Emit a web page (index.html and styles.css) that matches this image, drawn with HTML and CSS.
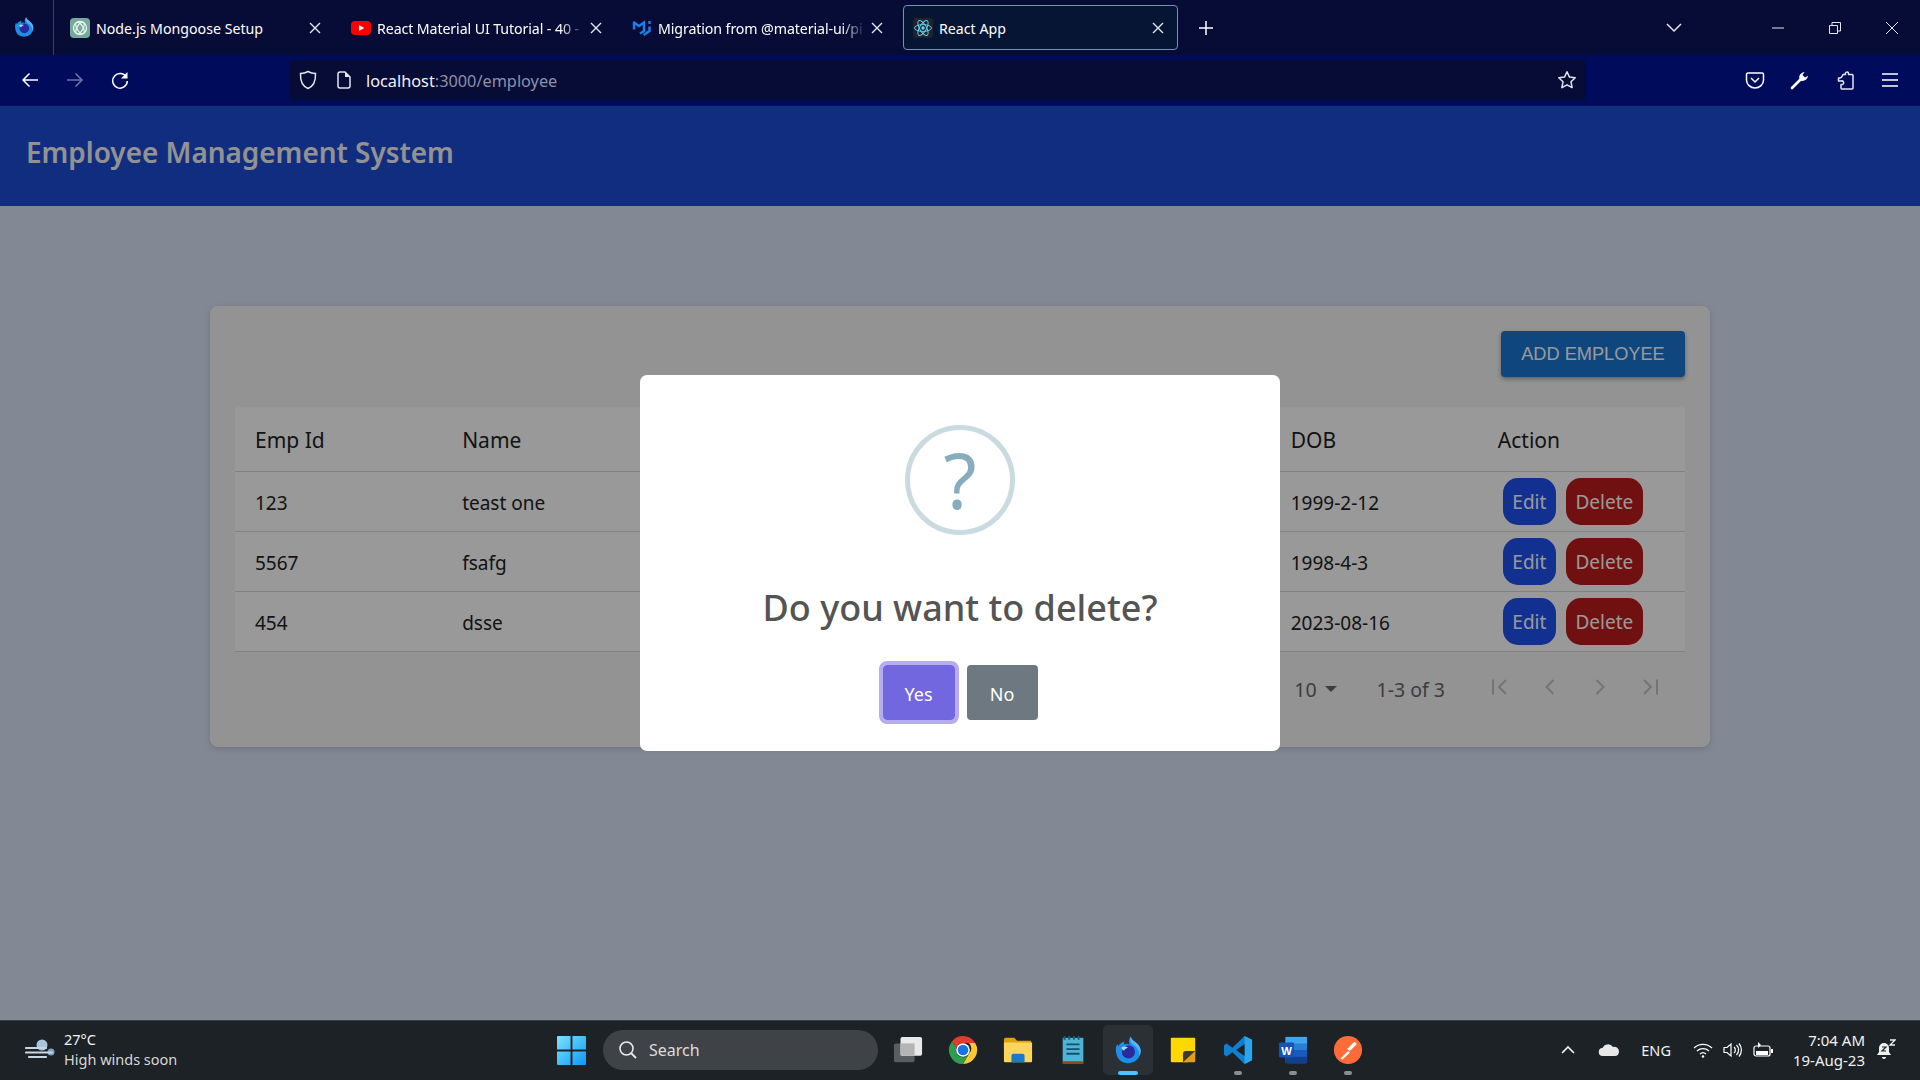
FILE: index.html
```html
<!DOCTYPE html>
<html lang="en">
<head>
  <meta charset="UTF-8">
  <title>React App</title>
  <link rel="stylesheet" href="styles.css">
</head>
<body>
  <svg class="sprites" width="0" height="0">
    <symbol id="firefox" viewBox="0 0 32 32">
      <path d="M3 15c0-2 .6-4 1.600-5.500 .2 1 .6 1.700 1.200 2.200C7.500 8.500 10 7 12.500 6.800 11.800 8 11.700 9 12 10c2-1 4.500-.8 6 .5-1.500-2.500-1.500-5.500 1-9 .5 3 3 4.500 5.500 6.500 3.500 2.800 5 6 5 9 0 7.500-6 13-14 13S3 24 3 15z" fill="#1d8fe8"/>
      <path d="M19 1.500c.5 3 3 4.500 5.500 6.500 3.500 2.800 5 6 5 9 0 2-.5 3.800-1.300 5.300C28.500 15 24 11.500 21 10c-2-1.800-3.500-4.500-2-8.500z" fill="#54b4f5"/>
      <circle cx="16.500" cy="18" r="7" fill="#2b2a9c"/>
      <path d="M9 13.500c2-1.500 5-1.500 7 0-2 .5-3.500 1.500-4 3-1.500-.3-2.500-1.500-3-3z" fill="#a8ddfb"/>
    </symbol>
    <symbol id="x" viewBox="0 0 14 14">
      <path d="M2 2l10 10M12 2L2 12" stroke="currentColor" stroke-width="1.400" fill="none"/>
    </symbol>
  </svg>

  <div class="tabbar">
    <div class="ff-button"><svg width="22" height="24"><use href="#firefox"/></svg></div>
    <div class="tab">
      <svg class="favicon" viewBox="0 0 20 20">
        <rect width="20" height="20" rx="4" fill="#74aa9c"/>
        <g fill="none" stroke="#e8f3f0" stroke-width="1.300">
          <circle cx="10" cy="10" r="6.500"/>
          <ellipse cx="10" cy="10" rx="6.500" ry="3" transform="rotate(60 10 10)"/>
          <ellipse cx="10" cy="10" rx="6.500" ry="3" transform="rotate(-60 10 10)"/>
        </g>
      </svg>
      <span class="tab-title">Node.js Mongoose Setup</span>
      <svg class="tab-close"><use href="#x"/></svg>
    </div>
    <div class="tab">
      <svg class="favicon" viewBox="0 0 20 20">
        <rect y="3" width="20" height="14" rx="4" fill="#f00"/>
        <path d="M8 7l5.200 3L8 13z" fill="#fff"/>
      </svg>
      <span class="tab-title tab-title-long">React Material UI Tutorial - 40 -</span>
      <svg class="tab-close"><use href="#x"/></svg>
    </div>
    <div class="tab">
      <svg class="favicon" viewBox="0 0 20 20">
        <path d="M2 3.500v8M2 4.500l5 3.500 5-3.500v8.500l-4 2.500" stroke="#1a7fe8" stroke-width="2.400" fill="none"/>
        <path d="M17.500 3v3M17.500 8.500V13l-6 4" stroke="#1a7fe8" stroke-width="2.400" fill="none"/>
      </svg>
      <span class="tab-title tab-title-long">Migration from @material-ui/pi</span>
      <svg class="tab-close"><use href="#x"/></svg>
    </div>
    <div class="tab tab-active">
      <svg class="favicon" viewBox="0 0 20 20">
        <rect width="20" height="20" rx="3" fill="#20232a"/>
        <g fill="none" stroke="#61dafb" stroke-width=".9">
          <ellipse cx="10" cy="10" rx="8.500" ry="3.400"/>
          <ellipse cx="10" cy="10" rx="8.500" ry="3.400" transform="rotate(60 10 10)"/>
          <ellipse cx="10" cy="10" rx="8.500" ry="3.400" transform="rotate(120 10 10)"/>
        </g>
        <circle cx="10" cy="10" r="1.700" fill="#61dafb"/>
      </svg>
      <span class="tab-title">React App</span>
      <svg class="tab-close"><use href="#x"/></svg>
    </div>
    <svg class="new-tab" viewBox="0 0 16 16"><path d="M8 1v14M1 8h14" stroke="#fff" stroke-width="1.500"/></svg>
    <div class="window-controls">
      <svg class="tabs-list" viewBox="0 0 16 10"><path d="M1 1l7 7 7-7" stroke="#e4e6ee" stroke-width="1.500" fill="none"/></svg>
      <svg class="win-btn" viewBox="0 0 12 12"><path d="M0 6h12" stroke="#e4e6ee"/></svg>
      <svg class="win-btn" viewBox="0 0 12 12"><path d="M.5 3.500h8v8h-8zM3 3.500V.500h8.500V9H8.500" stroke="#e4e6ee" fill="none"/></svg>
      <svg class="win-btn win-close" viewBox="0 0 14 14"><path d="M1 1l12 12M13 1L1 13" stroke="#e4e6ee" fill="none"/></svg>
    </div>
  </div>

  <div class="toolbar">
    <svg class="nav-icon" viewBox="0 0 18 18"><path d="M17 9H2M8.500 2.500L2 9l6.500 6.500" stroke="#fff" stroke-width="1.500" fill="none"/></svg>
    <svg class="nav-icon dim" viewBox="0 0 18 18"><path d="M1 9h15M9.500 2.500L16 9l-6.500 6.500" stroke="#6f74a8" stroke-width="1.500" fill="none"/></svg>
    <svg class="nav-icon" viewBox="0 0 18 18"><path d="M15.500 6.500A7.300 7.300 0 1 0 16.300 10" stroke="#fff" stroke-width="1.500" fill="none"/><path d="M16.500 1v6.500H10z" fill="#fff"/></svg>
    <div class="urlbar">
      <svg class="url-icon" viewBox="0 0 18 20"><path d="M9 1.500c2.500 1.500 5 2 7.500 2 .3 7-1.500 12.500-7.500 15-6-2.500-7.800-8-7.500-15 2.500 0 5-.5 7.500-2z" stroke="#e4e6ee" stroke-width="1.500" fill="none"/></svg>
      <svg class="url-icon page-icon" viewBox="0 0 14 18"><path d="M3 1h5l5 5v9a2 2 0 0 1-2 2H3a2 2 0 0 1-2-2V3a2 2 0 0 1 2-2z" stroke="#e4e6ee" stroke-width="1.500" fill="none"/><path d="M8 1v5h5z" fill="#e4e6ee"/></svg>
      <span class="url-text">localhost<span class="url-dim">:3000/employee</span></span>
      <svg class="star" viewBox="0 0 20 20"><path d="M10 1.800l2.500 5.300 5.700.7-4.200 4 1.100 5.800-5.100-2.800-5.100 2.800 1.100-5.800-4.200-4 5.700-.7z" stroke="#e4e6ee" stroke-width="1.500" stroke-linejoin="round" fill="none"/></svg>
    </div>
    <div class="toolbar-right">
      <svg class="tool-icon" viewBox="0 0 20 20"><path d="M3 3h14a1.500 1.500 0 0 1 1.500 1.500V10a8.500 8 0 0 1-17 0V4.500A1.500 1.500 0 0 1 3 3z" stroke="#fff" stroke-width="1.500" fill="none"/><path d="M6 8l4 4 4-4" stroke="#fff" stroke-width="1.500" fill="none"/></svg>
      <svg class="tool-icon" viewBox="0 0 20 20"><path d="M2 18l8-8" stroke="#fff" stroke-width="2.600" stroke-linecap="round"/><path d="M9.500 9c-1-3 1-6.500 5-7l-2 3 2.500 2.500 3-1.800c-.3 3.500-4 6-7 5z" fill="#fff"/></svg>
      <svg class="tool-icon" viewBox="0 0 20 20"><path d="M8 4.500h2.500c-1.200-2.500 3-3.500 3-1v1H17a1 1 0 0 1 1 1V18a1 1 0 0 1-1 1H7a1 1 0 0 1-1-1v-3.500c2 .5 3-1 2.700-2-.3-1.200-1.500-1.800-2.700-1.500H3.500V8H5c2 0 2-1.500 3-3.500z" stroke="#e4e6ee" stroke-width="1.500" fill="none" stroke-linejoin="round"/></svg>
      <svg class="tool-icon" viewBox="0 0 20 20"><path d="M2 4h16M2 10h16M2 16h16" stroke="#fff" stroke-width="1.500"/></svg>
    </div>
  </div>

  <div class="page">
    <header class="appbar">Employee Management System</header>
    <main class="content">
      <section class="card">
        <div class="card-actions">
          <button class="add-btn">ADD EMPLOYEE</button>
        </div>
        <table class="emp-table">
          <thead>
            <tr><th>Emp Id</th><th>Name</th><th></th><th></th><th></th><th>DOB</th><th>Action</th></tr>
          </thead>
          <tbody>
            <tr>
              <td>123</td><td>teast one</td><td></td><td></td><td></td><td>1999-2-12</td>
              <td class="actions"><button class="btn-edit">Edit</button><button class="btn-delete">Delete</button></td>
            </tr>
            <tr>
              <td>5567</td><td>fsafg</td><td></td><td></td><td></td><td>1998-4-3</td>
              <td class="actions"><button class="btn-edit">Edit</button><button class="btn-delete">Delete</button></td>
            </tr>
            <tr>
              <td>454</td><td>dsse</td><td></td><td></td><td></td><td>2023-08-16</td>
              <td class="actions"><button class="btn-edit">Edit</button><button class="btn-delete">Delete</button></td>
            </tr>
          </tbody>
        </table>
        <div class="pagination">
          <span class="per-page">10<i class="caret"></i></span>
          <span class="page-info">1-3 of 3</span>
          <div class="page-btns">
            <svg viewBox="0 0 20 20"><path d="M3 2.500v15M16 3L9 10l7 7" stroke="#c2c2c2" stroke-width="2" fill="none"/></svg>
            <svg viewBox="0 0 20 20"><path d="M13.500 3l-7 7 7 7" stroke="#c2c2c2" stroke-width="2" fill="none"/></svg>
            <svg viewBox="0 0 20 20"><path d="M6.500 3l7 7-7 7" stroke="#c2c2c2" stroke-width="2" fill="none"/></svg>
            <svg viewBox="0 0 20 20"><path d="M4 3l7 7-7 7M17 2.500v15" stroke="#c2c2c2" stroke-width="2" fill="none"/></svg>
          </div>
        </div>
      </section>
    </main>

    <div class="overlay">
      <div class="modal">
        <div class="question">?</div>
        <h2 class="modal-title">Do you want to delete?</h2>
        <div class="modal-btns">
          <button class="btn-yes">Yes</button>
          <button class="btn-no">No</button>
        </div>
      </div>
    </div>
  </div>

  <footer class="taskbar">
    <div class="weather">
      <svg class="weather-icon" viewBox="0 0 32 24"><circle cx="17" cy="7" r="5.500" fill="#a9c4dc"/><circle cx="26" cy="14" r="3.500" fill="#7fa2c2"/><path d="M1 10h20M1 14.500h26M4 19h17" stroke="#c8d6e2" stroke-width="2.200" stroke-linecap="round"/></svg>
      <div class="weather-text">
        <div class="temp">27°C</div>
        <div class="forecast">High winds soon</div>
      </div>
    </div>

    <div class="task-center">
      <svg class="win-logo" viewBox="0 0 30 30">
        <defs><linearGradient id="winblue" x1="0" y1="0" x2="1" y2="1"><stop offset="0" stop-color="#7ae4ff"/><stop offset="1" stop-color="#0f98f5"/></linearGradient></defs>
        <path d="M0 1a1 1 0 0 1 1-1h13v14H0zM16 0h13a1 1 0 0 1 1 1v13H16zM0 16h14v14H1a1 1 0 0 1-1-1zM16 16h14v13a1 1 0 0 1-1 1H16z" fill="url(#winblue)"/>
      </svg>
      <div class="search">
        <svg viewBox="0 0 20 20" width="20" height="20"><circle cx="8.500" cy="8.500" r="6.500" stroke="#e8e8e8" stroke-width="1.600" fill="none"/><path d="M13 13l5 5" stroke="#e8e8e8" stroke-width="1.800"/></svg>
        <span>Search</span>
      </div>
      <div class="apps">
        <div class="app"><svg viewBox="0 0 32 32"><rect x="1" y="9" width="22" height="20" rx="2" fill="#5a5d60"/><rect x="8" y="2" width="23" height="20" rx="2" fill="#e9e9e9"/><rect x="8" y="9" width="15" height="13" fill="#b4b4b4"/></svg></div>
        <div class="app"><svg viewBox="0 0 32 32"><path d="M16 1a15 15 0 0 1 13 7.500H16a7.500 7.500 0 0 0-7 4.800L4.200 6.800A15 15 0 0 1 16 1z" fill="#e33b2e"/><path d="M29 8.500A15 15 0 0 1 16 31l6.500-11.200a7.500 7.500 0 0 0-.3-11.300z" fill="#fcc934"/><path d="M4.200 6.800L9 13.300a7.500 7.500 0 0 0 13.500 6.500L16 31A15 15 0 0 1 4.200 6.800z" fill="#2f9e4c"/><circle cx="16" cy="16" r="7.300" fill="#fff"/><circle cx="16" cy="16" r="5.700" fill="#1a73e8"/></svg></div>
        <div class="app"><svg viewBox="0 0 32 32"><path d="M1 5a2 2 0 0 1 2-2h9l3 3h15v8H1z" fill="#e0a30e"/><path d="M1 8h30v20a1 1 0 0 1-1 1H2a1 1 0 0 1-1-1z" fill="#fbd65a"/><path d="M9 29v-7a2 2 0 0 1 2-2h10a2 2 0 0 1 2 2v7z" fill="#1a7ac4"/></svg></div>
        <div class="app"><svg viewBox="0 0 32 32"><rect x="5" y="3" width="22" height="27" fill="#4fb3d4"/><rect x="5" y="28" width="22" height="3" fill="#8a4a20"/><path d="M9 10h14M9 15h14M9 20h14" stroke="#11506e" stroke-width="2"/><path d="M7 1v4M12 1v4M17 1v4M22 1v4" stroke="#0d5f80" stroke-width="2"/></svg></div>
        <div class="app app-active">
          <svg viewBox="0 0 32 32"><use href="#firefox"/></svg>
          <i class="running"></i>
        </div>
        <div class="app"><svg viewBox="0 0 32 32"><path d="M4 3h24a1 1 0 0 1 1 1v17l-8 8H4a1 1 0 0 1-1-1V4a1 1 0 0 1 1-1z" fill="#ffd800"/><path d="M29 17v11a1 1 0 0 1-1 1H16V20a3 3 0 0 1 3-3z" fill="#3c3a36"/><path d="M29 17L16 29h12a1 1 0 0 0 1-1z" fill="#e0a30e"/></svg></div>
        <div class="app">
          <svg viewBox="0 0 32 32"><path d="M23 1l8 4v22l-8 4-13-12.500L4 23l-3-2v-10l3-2 6 4.500z" fill="#0f7fd0"/><path d="M23 1l8 4v22l-8 4z" fill="#2aa5ee"/><path d="M23 9.500L14 16l9 6.500z" fill="#1c2226"/></svg>
          <i class="open"></i>
        </div>
        <div class="app">
          <svg viewBox="0 0 32 32"><rect x="8" y="2" width="23" height="28" rx="1.500" fill="#2b7cd3"/><rect x="8" y="2" width="23" height="7" fill="#41a5ee"/><rect x="8" y="16" width="23" height="7" fill="#185abd"/><rect x="8" y="23" width="23" height="7" fill="#103f91"/><rect x="1" y="8" width="16" height="16" rx="1.500" fill="#1554b4"/><text x="9" y="21" class="word-w">W</text></svg>
          <i class="open"></i>
        </div>
        <div class="app">
          <svg viewBox="0 0 32 32"><circle cx="16" cy="16" r="15" fill="#ff6c37"/><path d="M8 25l8-8 2 2-8 7zM15 15l7-7c2-1 3 0 3 2l-7 7z" fill="#fff"/></svg>
          <i class="open"></i>
        </div>
      </div>
    </div>

    <div class="tray">
      <svg class="tray-chevron" viewBox="0 0 14 8"><path d="M1 7l6-6 6 6" stroke="#fff" stroke-width="1.600" fill="none"/></svg>
      <svg class="tray-cloud" viewBox="0 0 22 14"><path d="M5 13a4 4 0 0 1-.5-8A6 6 0 0 1 15 4a4.500 4.500 0 0 1 6 4.500c0 2.500-1.500 4.500-4 4.500z" fill="#e8e8e8"/></svg>
      <span class="lang">ENG</span>
      <svg class="tray-icon" viewBox="0 0 20 16"><path d="M1 6a13 13 0 0 1 18 0M4 9a9 9 0 0 1 12 0M7 12a4.500 4.500 0 0 1 6 0" stroke="#fff" stroke-width="1.300" fill="none"/><circle cx="10" cy="14.500" r="1.200" fill="#fff"/></svg>
      <svg class="tray-icon" viewBox="0 0 20 16"><path d="M1 5.500h3L8 2v12l-4-3.500H1z" stroke="#fff" stroke-width="1.200" fill="none"/><path d="M11 5a4 4 0 0 1 0 6M13.500 3a7 7 0 0 1 0 10M16 1.500a10 10 0 0 1 0 13" stroke="#fff" stroke-width="1.200" fill="none"/></svg>
      <svg class="tray-icon" viewBox="0 0 20 16"><rect x="1" y="4" width="16" height="10" rx="2" stroke="#fff" stroke-width="1.200" fill="none"/><rect x="3" y="9" width="12" height="4" fill="#fff"/><rect x="18" y="7" width="2" height="4" fill="#fff"/><path d="M5 0v6l3-3z" fill="#fff"/></svg>
      <div class="clock">
        <div>7:04 AM</div>
        <div>19-Aug-23</div>
      </div>
      <svg class="bell" viewBox="0 0 20 22"><path d="M8 4a5 5 0 0 0-5 5v4l-2 3h14l-2-3V9a5 5 0 0 0-5-5z" fill="#f0f0f0"/><path d="M6 18h4a2 2 0 0 1-4 0z" fill="#f0f0f0"/><path d="M6 8h4l-4 4h4" stroke="#1c2226" stroke-width="1.200" fill="none"/><path d="M14 1h5l-5 5h5" stroke="#f0f0f0" stroke-width="1.300" fill="none"/></svg>
    </div>
  </footer>
</body>
</html>
```

FILE: styles.css
```css
* {
  box-sizing: border-box;
}

body {
  margin: 0;
  height: 100vh;
  display: flex;
  flex-direction: column;
  overflow: hidden;
  font-family: "Noto Sans", sans-serif;
}

button {
  font-family: inherit;
  border: none;
  color: #fff;
}

.sprites {
  position: absolute;
}

/* browser chrome */
.tabbar {
  height: 55px;
  flex-shrink: 0;
  display: flex;
  align-items: center;
  background-color: #070c37;
  color: #fff;
  font-size: 14.2px;
}

.ff-button {
  width: 54px;
  height: 55px;
  flex-shrink: 0;
  border-right: 1px solid #3a3e63;
  display: flex;
  align-items: center;
  justify-content: center;
  padding-right: 6px;
  padding-bottom: 2px;
  margin-right: 6px;
}

.tab {
  width: 275px;
  height: 45px;
  flex-shrink: 0;
  margin-right: 6px;
  padding: 0 12px 0 9px;
  display: flex;
  align-items: center;
  border: 1px solid transparent;
  border-radius: 4px;
}

.tab-active {
  background-color: #071535;
  border-color: #6f8fd6;
}

.favicon {
  width: 20px;
  height: 20px;
  flex-shrink: 0;
  margin-right: 6px;
}

.tab-title {
  flex: 1;
  white-space: nowrap;
  padding-top: 1px;
}

.tab-title-long {
  letter-spacing: -0.1px;
  -webkit-mask-image: linear-gradient(to right, #000 88%, transparent 100%);
  mask-image: linear-gradient(to right, #000 88%, transparent 100%);
}

.tab-close {
  width: 14px;
  height: 14px;
  flex-shrink: 0;
  margin-left: 4px;
  color: #e4e6ee;
}

.new-tab {
  width: 16px;
  height: 16px;
  margin-left: 14px;
}

.window-controls {
  margin-left: auto;
  display: flex;
  align-items: center;
  height: 100%;
}

.tabs-list {
  width: 16px;
  height: 10px;
  margin-right: 90px;
}

.win-btn {
  width: 12px;
  height: 12px;
  margin-right: 44.5px;
}

.win-close {
  width: 14px;
  height: 14px;
  margin-right: 21px;
}

.toolbar {
  height: 51px;
  flex-shrink: 0;
  display: flex;
  align-items: center;
  background-color: #000b5c;
  border-bottom: 1px solid #0a1240;
  padding-left: 21px;
}

.nav-icon {
  width: 18px;
  height: 18px;
  margin-right: 27px;
}

.urlbar {
  width: 1297px;
  height: 40px;
  margin-left: 133px;
  background-color: #070c37;
  border-radius: 4px;
  display: flex;
  align-items: center;
  padding: 0 9px 0 10px;
}

.url-icon {
  width: 18px;
  height: 20px;
}

.page-icon {
  width: 14px;
  height: 18px;
  margin-left: 20px;
}

.url-text {
  margin-left: 15px;
  padding-top: 2px;
  font-size: 16.3px;
  color: #f2f2f6;
}

.url-dim {
  color: #8d90a8;
}

.star {
  margin-left: auto;
  width: 20px;
  height: 20px;
}

.toolbar-right {
  margin-left: auto;
  display: flex;
  align-items: center;
  gap: 25px;
  padding-right: 20px;
}

.tool-icon {
  width: 20px;
  height: 20px;
}

/* app page */
.page {
  position: relative;
  flex: 1;
  display: flex;
  flex-direction: column;
  background-color: #d9e3f7;
}

.appbar {
  height: 100px;
  flex-shrink: 0;
  padding: 0 0 8px 26px;
  display: flex;
  align-items: center;
  background-color: #1b4bd5;
  color: #f4f4f4;
  font-size: 27.9px;
  font-weight: 600;
}

.content {
  padding: 100px 210px 0;
}

.card {
  height: 441px;
  padding: 25px;
  background-color: #f5f5f5;
  border-radius: 8px;
  box-shadow: 0 2px 6px rgba(0, 0, 0, 0.15);
}

.card-actions {
  display: flex;
  justify-content: flex-end;
  margin-bottom: 30px;
}

.add-btn {
  width: 184px;
  height: 46px;
  background-color: #1976d2;
  border-radius: 4px;
  font-family: "Liberation Sans", sans-serif;
  font-size: 18.2px;
  box-shadow: 0 2px 4px rgba(0, 0, 0, 0.35);
}

.emp-table {
  width: 100%;
  table-layout: fixed;
  border-collapse: separate;
  border-spacing: 0;
  background-color: #fff;
  border-radius: 4px;
  color: #222;
  font-size: 19px;
}

.emp-table th {
  height: 65px;
  padding: 2px 20px 0;
  text-align: left;
  font-size: 21px;
  font-weight: 400;
  border-bottom: 1px solid #d8d8d8;
}

.emp-table td {
  height: 60px;
  padding: 2px 20px 0;
  border-bottom: 1px solid #d8d8d8;
}

.emp-table td.actions {
  padding: 0 0 0 25px;
  white-space: nowrap;
}

.btn-edit,
.btn-delete {
  height: 47px;
  padding: 0;
  border-radius: 15px;
  font-size: 19px;
  vertical-align: middle;
}

.btn-edit {
  width: 53px;
  background-color: #1e50ef;
  margin-right: 10px;
}

.btn-delete {
  width: 77px;
  background-color: #bb1b1b;
}

.pagination {
  height: 70px;
  display: flex;
  align-items: center;
  justify-content: flex-end;
  padding-right: 10px;
  color: #666;
  font-size: 19.5px;
}

.per-page {
  display: flex;
  align-items: center;
  margin-right: 40px;
  padding-top: 4px;
}

.caret {
  width: 0;
  height: 0;
  margin-left: 8px;
  border-left: 6px solid transparent;
  border-right: 6px solid transparent;
  border-top: 6px solid #666;
}

.page-info {
  margin-right: 30px;
  padding-top: 4px;
}

.page-btns {
  display: flex;
  gap: 30px;
  padding: 0 15px;
}

.page-btns svg {
  width: 20px;
  height: 20px;
}

/* dialog */
.overlay {
  position: absolute;
  inset: 0;
  display: flex;
  align-items: center;
  justify-content: center;
  background-color: rgba(0, 0, 0, 0.4);
}

.modal {
  width: 640px;
  height: 376px;
  padding-top: 50px;
  background-color: #fff;
  border-radius: 7px;
  display: flex;
  flex-direction: column;
  align-items: center;
}

.question {
  width: 110px;
  height: 110px;
  border: 5px solid #c9dae1;
  border-radius: 50%;
  display: flex;
  align-items: center;
  justify-content: center;
  color: #87adbd;
  font-size: 76px;
  line-height: 1;
}

.modal-title {
  margin: 41px 0 0;
  font-size: 36px;
  font-weight: 500;
  line-height: 64px;
  color: #545454;
}

.modal-btns {
  margin-top: 25px;
  display: flex;
  gap: 12px;
}

.btn-yes,
.btn-no {
  height: 55px;
  padding: 2px 0 0;
  border-radius: 4px;
  font-size: 18px;
}

.btn-yes {
  width: 72px;
  background-color: #7367e0;
  outline: 4px solid #b5adef;
}

.btn-no {
  width: 71px;
  background-color: #6e7880;
}

/* windows taskbar */
.taskbar {
  position: relative;
  height: 60px;
  flex-shrink: 0;
  padding-bottom: 1px;
  display: flex;
  align-items: center;
  justify-content: space-between;
  background-color: #1c2226;
  border-top: 1px solid #3a3e42;
  color: #f2f2f2;
}

.weather {
  display: flex;
  align-items: center;
  padding-left: 25px;
  width: 300px;
}

.weather-icon {
  width: 32px;
  height: 24px;
  margin-right: 7px;
}

.weather-text {
  font-size: 14.5px;
  line-height: 20px;
}

.temp {
  margin-top: -2px;
}

.forecast {
  color: #d8d8d8;
}

.task-center {
  position: absolute;
  left: 557px;
  top: 0;
  bottom: 1px;
  display: flex;
  align-items: center;
}

.win-logo {
  width: 29px;
  height: 29px;
  margin-right: 17px;
}

.search {
  width: 275px;
  height: 40px;
  padding-left: 15px;
  background-color: #3f4347;
  border-radius: 20px;
  display: flex;
  align-items: center;
  gap: 11px;
  font-size: 16px;
  color: #dcdcdc;
}

.apps {
  display: flex;
  align-items: center;
  margin-left: 2px;
}

.app {
  position: relative;
  width: 55px;
  height: 50px;
  display: flex;
  align-items: center;
  justify-content: center;
}

.app svg {
  width: 30px;
  height: 30px;
}

.app-active {
  width: 50px;
  margin: 0 2.5px;
  background-color: #2a3034;
  border-radius: 5px;
}

.running,
.open {
  position: absolute;
  bottom: 0;
  left: 50%;
  height: 4px;
  border-radius: 2px;
}

.running {
  width: 20px;
  margin-left: -10px;
  background-color: #4cc2ff;
}

.open {
  width: 8px;
  margin-left: -4px;
  background-color: #8a8e92;
}

.word-w {
  font-family: "Liberation Sans", sans-serif;
  font-size: 12px;
  font-weight: 700;
  fill: #fff;
  text-anchor: middle;
}

.tray {
  display: flex;
  align-items: center;
  padding-right: 24px;
}

.tray-chevron {
  width: 14px;
  height: 8px;
  margin-right: 23px;
}

.tray-cloud {
  width: 22px;
  height: 14px;
  margin-right: 21px;
}

.lang {
  font-size: 14.5px;
  margin-right: 22px;
}

.tray-icon {
  width: 20px;
  height: 16px;
  margin-right: 10px;
}

.clock {
  margin-left: 10px;
  margin-right: 11px;
  text-align: right;
  font-size: 15px;
  line-height: 20px;
}

.bell {
  width: 20px;
  height: 22px;
}
```
